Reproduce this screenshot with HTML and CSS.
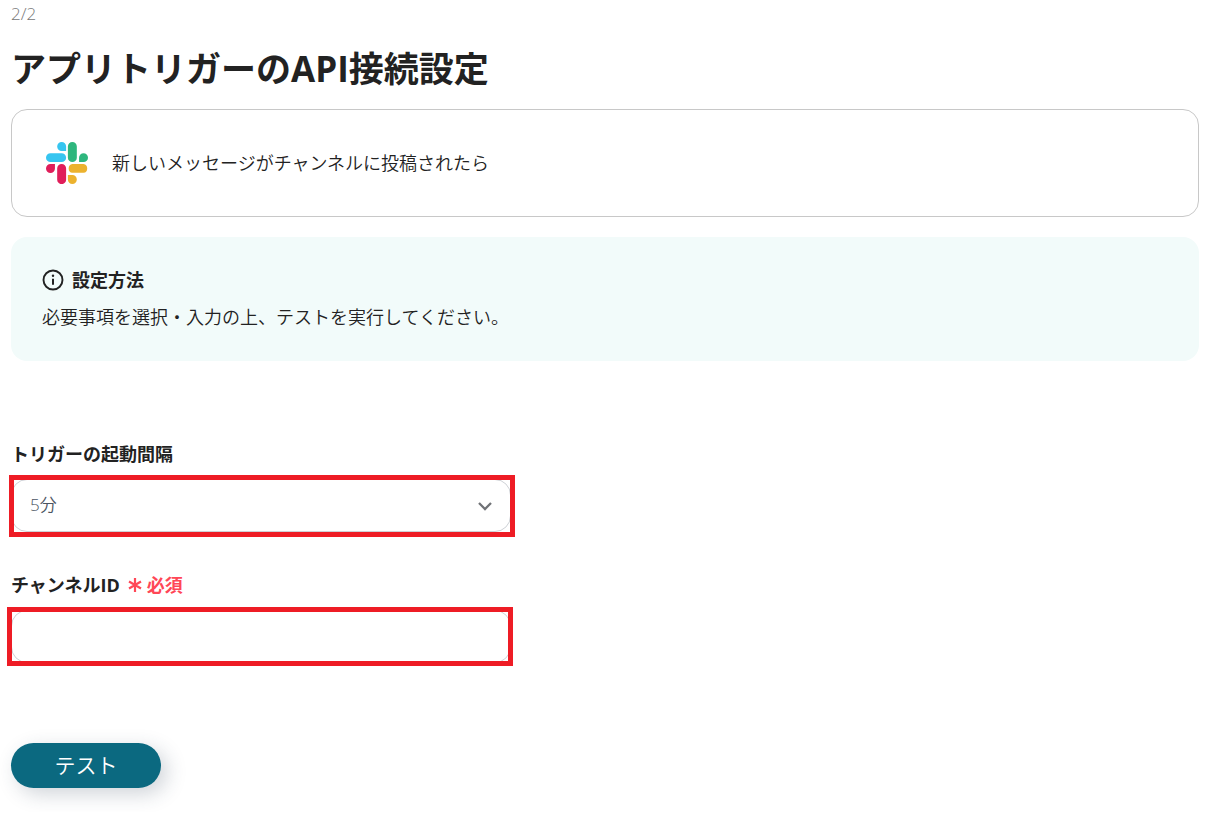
FILE: index.html
```html
<!DOCTYPE html>
<html lang="ja">
<head>
<meta charset="utf-8">
<meta name="viewport" content="width=device-width, initial-scale=1">
<title>アプリトリガーのAPI接続設定</title>
<link rel="stylesheet" href="styles.css">
</head>
<body>
<main class="page">
  <p class="step">2/2</p>
  <h1 class="title">アプリトリガーのAPI接続設定</h1>

  <section class="trigger">
    <svg class="trigger-logo" viewBox="0 0 124 124" aria-hidden="true">
      <path fill="#e01e5a" d="M26.400 78.200a13.200 13.200 0 1 1-13.200-13.200h13.200zM33 78.200a13.200 13.200 0 0 1 26.400 0v33a13.200 13.200 0 0 1-26.400 0z"/>
      <path fill="#36c5f0" d="M46.200 26.400a13.200 13.200 0 1 1 13.200-13.200v13.200zM46.200 33a13.200 13.200 0 0 1 0 26.400h-33a13.200 13.200 0 0 1 0-26.400z"/>
      <path fill="#2eb67d" d="M97.600 46.200a13.200 13.200 0 1 1 13.200 13.200h-13.200zM91 46.200a13.200 13.200 0 0 1-26.400 0v-33a13.200 13.200 0 0 1 26.400 0z"/>
      <path fill="#ecb22e" d="M77.800 97.600a13.200 13.200 0 1 1-13.200 13.200v-13.200zM77.800 91a13.200 13.200 0 0 1 0-26h33a13.200 13.200 0 0 1 0 26z"/>
    </svg>
    <p class="trigger-text">新しいメッセージがチャンネルに投稿されたら</p>
  </section>

  <section class="guide">
    <h2 class="guide-title">
      <svg class="guide-icon" viewBox="0 0 22 22" aria-hidden="true">
        <circle cx="11" cy="11" r="9.500" fill="none" stroke="#222" stroke-width="1.900"/>
        <circle cx="11" cy="6.800" r="1.200" fill="#222"/>
        <path d="M11 9.800v6" stroke="#222" stroke-width="2"/>
      </svg>
      設定方法
    </h2>
    <p class="guide-text">必要事項を選択・入力の上、テストを実行してください。</p>
  </section>

  <form class="form">
    <div class="field">
      <label class="label" for="interval">トリガーの起動間隔</label>
      <div class="control control-select">
        <select class="input select" id="interval" name="interval">
          <option>5分</option>
        </select>
        <svg class="chevron" viewBox="0 0 16 10" aria-hidden="true">
          <path d="M2 2l6 6 6-6" fill="none" stroke="#707276" stroke-width="2.300"/>
        </svg>
      </div>
    </div>
    <div class="field">
      <label class="label" for="channel">チャンネルID
        <span class="required"><svg class="asterisk" viewBox="0 0 14 16" aria-hidden="true"><path d="M7 1v14M1 4.500l12 7M13 4.500l-12 7" stroke="#ff4757" stroke-width="2.200"/></svg>必須</span>
      </label>
      <div class="control control-text">
        <input class="input" id="channel" name="channel" type="text" required>
      </div>
    </div>
    <button class="submit" type="button">テスト</button>
  </form>
</main>
</body>
</html>
```
FILE: styles.css
```css
* {
  box-sizing: border-box;
}

body {
  margin: 0;
  background: #fff;
  color: #222;
  font-family: "Open Sans", "Noto Sans CJK JP", sans-serif;
  font-size: 18px;
  font-weight: 350;
  line-height: 28px;
}

p,
h1,
h2 {
  margin: 0;
}

.page {
  padding: 0 18px 24px 11px;
}

.step {
  color: #777;
  font-size: 17px;
}

.title {
  margin: 16px 0;
  font-size: 35px;
  font-weight: 700;
  line-height: 49px;
}

.trigger {
  display: flex;
  align-items: center;
  gap: 24px;
  padding: 32px 34px;
  border: 1px solid #c8c8c8;
  border-radius: 16px;
}

.trigger-logo {
  width: 42px;
  height: 42px;
}

.guide {
  margin-top: 20px;
  padding: 28px 31px 30px;
  border-radius: 16px;
  background: #f2fbfa;
}

.guide-title {
  display: flex;
  align-items: center;
  gap: 8px;
  margin-bottom: 8px;
  font-size: 18px;
  font-weight: 700;
  line-height: 30px;
}

.guide-icon {
  width: 22px;
  height: 22px;
}

.guide-text {
  line-height: 28px;
}

.form {
  margin-top: 80px;
}

.field {
  max-width: 500px;
  margin-bottom: 40px;
}

.label {
  display: flex;
  align-items: center;
  gap: 8px;
  margin-bottom: 12px;
  font-weight: 700;
  line-height: 26px;
}

.required {
  display: flex;
  align-items: center;
  gap: 5px;
  color: #ff4757;
}

.asterisk {
  width: 14px;
  height: 16px;
}

.control {
  position: relative;
}

.control::after {
  content: "";
  position: absolute;
  border: 5px solid #ee1c25;
  pointer-events: none;
}

.control-select::after {
  inset: -4px -4px -5px -2px;
}

.control-text::after {
  inset: -3px -2px -3px -4px;
}

.input {
  display: block;
  width: 100%;
  height: 53px;
  padding: 0 18px 2px;
  border: 1px solid #ced1d6;
  border-radius: 16px;
  outline: 0;
  background: #fff;
  color: #4b5563;
  font: inherit;
  font-size: 17px;
}

.select {
  appearance: none;
}

.chevron {
  position: absolute;
  top: 22px;
  right: 18px;
  width: 16px;
  height: 10px;
  pointer-events: none;
}

.submit {
  width: 150px;
  height: 45px;
  margin-top: 40px;
  padding: 0 0 2px;
  border: 0;
  border-radius: 23px;
  background: #0b6980;
  box-shadow: 6px 6px 20px rgba(40, 60, 80, 0.22);
  color: #fff;
  font: inherit;
  font-size: 21px;
}
```
